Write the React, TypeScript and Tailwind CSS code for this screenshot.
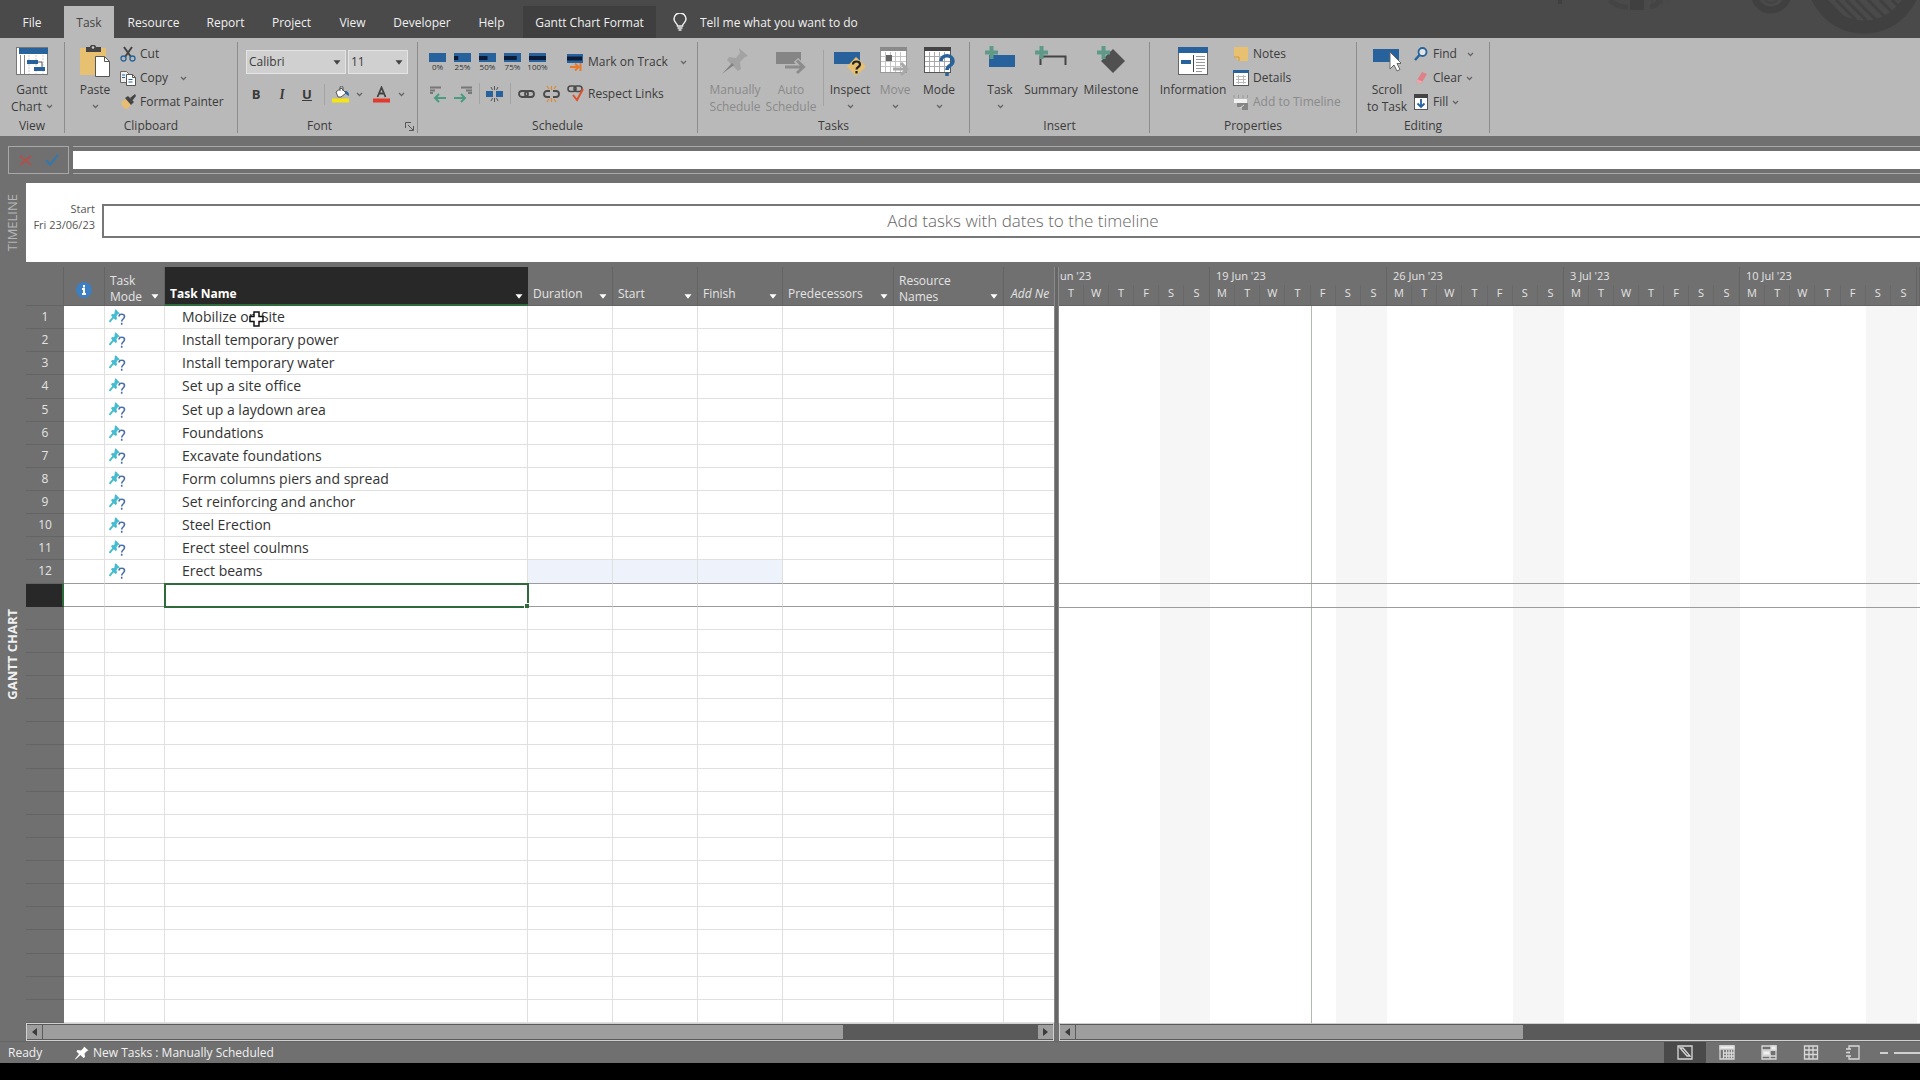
import React from "react";

const tabs = [
  { name: "File", className: "w-[50px] mx-[7px]" },
  { name: "Task", className: "w-[50px] bg-[#b9b9b9] !text-[#444444]" },
  { name: "Resource", className: "w-[79px]" },
  { name: "Report", className: "w-[65px]" },
  { name: "Project", className: "w-[67px]" },
  { name: "View", className: "w-[55px]" },
  { name: "Developer", className: "w-[84px]" },
  { name: "Help", className: "w-[55px] mr-1" },
  { name: "Gantt Chart Format", className: "w-[133px] bg-[#3f3f3f]" },
];

const tasks = [
  "Mobilize on Site",
  "Install temporary power",
  "Install temporary water",
  "Set up a site office",
  "Set up a laydown area",
  "Foundations",
  "Excavate foundations",
  "Form columns piers and spread",
  "Set reinforcing and anchor",
  "Steel Erection",
  "Erect steel coulmns",
  "Erect beams",
];

const ROW_COUNT = 31;
const SELECTED_ROW = 12;
const rows = Array.from({ length: ROW_COUNT }, (_, i) => tasks[i] || "");

const columns = [
  { label: "Duration", key: "duration" },
  { label: "Start", key: "start" },
  { label: "Finish", key: "finish" },
  { label: "Predecessors", key: "predecessors" },
  { label: "Resource Names", key: "resources" },
];

const weeks = [
  { label: "un '23", days: ["T", "W", "T", "F", "S", "S"] },
  { label: "19 Jun '23", days: ["M", "T", "W", "T", "F", "S", "S"], today: 4 },
  { label: "26 Jun '23", days: ["M", "T", "W", "T", "F", "S", "S"] },
  { label: "3 Jul '23", days: ["M", "T", "W", "T", "F", "S", "S"] },
  { label: "10 Jul '23", days: ["M", "T", "W", "T", "F", "S", "S"] },
  { label: "", days: [] },
];

const Chevron = ({ className = "" }) => (
  <svg width="7" height="5" viewBox="0 0 7 5" className={`shrink-0 ${className}`}>
    <path d="M1 1l2.5 2.5L6 1" fill="none" stroke="#666" strokeWidth="1.3" />
  </svg>
);

const Triangle = ({ className = "fill-white" }) => (
  <svg width="8" height="5" viewBox="0 0 8 5" className={`shrink-0 ${className}`}>
    <path d="M0.5 0.3h7L4 4.8z" />
  </svg>
);

/* ---------- ribbon icons ---------- */

const GanttIcon = () => (
  <svg width="32" height="28" viewBox="0 0 32 28">
    <rect x="0.5" y="0.5" width="31" height="27" fill="#fff" stroke="#777" />
    <rect x="3" y="1" width="29" height="6" fill="#27629c" />
    <path d="M4.500 8v19M8.500 8v19" stroke="#888" />
    <path d="M13 8v19M20 8v19M27 8v19" stroke="#ccc" strokeDasharray="2 1" />
    <rect x="11" y="13" width="11" height="4" fill="#27629c" />
    <rect x="18" y="20" width="11" height="4" fill="#27629c" />
    <path d="M22 15h4v5" fill="none" stroke="#555" />
  </svg>
);

const PasteIcon = () => (
  <svg width="32" height="32" viewBox="0 0 32 32">
    <rect x="1" y="3" width="26" height="27" fill="#e8c071" />
    <path d="M7 2h4c0-3 6-3 6 0h5v5H7z" fill="#444" />
    <circle cx="14" cy="2.500" r="1.300" fill="#ccc" />
    <path d="M16.500 11.500h9l5 5v15h-14z" fill="#fff" stroke="#555" />
    <path d="M25.500 11.500v5h5" fill="none" stroke="#555" />
  </svg>
);

const CutIcon = () => (
  <svg width="16" height="16" viewBox="0 0 16 16" fill="none">
    <path d="M4 1l7 10M12 1L5 11" stroke="#444" strokeWidth="2" />
    <circle cx="3.500" cy="12.500" r="2.500" stroke="#27629c" strokeWidth="1.300" />
    <circle cx="12.500" cy="12.500" r="2.500" stroke="#27629c" strokeWidth="1.300" />
  </svg>
);

const CopyIcon = () => (
  <svg width="16" height="16" viewBox="0 0 16 16">
    <path d="M0.500 1.500h6l2 2v9h-8z" fill="#eee" stroke="#666" />
    <path d="M6.500 4.500h6l3 3v8h-9z" fill="#fff" stroke="#555" />
    <path d="M12.500 4.500v3h3" fill="none" stroke="#555" />
    <path d="M2 5h3M2 7.500h3M8.500 9.500h4M8.500 12h4" stroke="#27629c" />
  </svg>
);

const PainterIcon = () => (
  <svg width="16" height="16" viewBox="0 0 16 16">
    <path d="M1 8l5-3 5 6-4 4c-3 0-5-3-6-7z" fill="#e8bd72" />
    <path d="M5 4l3-2 6 6-3 3z" fill="#444" />
    <path d="M10 4l5-4 1 2-4 5z" fill="#444" />
  </svg>
);

const BucketIcon = () => (
  <svg width="18" height="17" viewBox="0 0 18 17">
    <path d="M4 6l5-4 5 5-5 4H6z" fill="#fff" stroke="#555" />
    <path d="M8 5V1.500c0-2 3-2 3 0V5" fill="none" stroke="#555" />
    <path d="M13 5c3 0 4 2 4 5-2-1-3-2-4-3z" fill="#27629c" />
    <rect y="12.500" width="17" height="4" fill="#f5e612" />
  </svg>
);

const FontColorIcon = () => (
  <svg width="17" height="17" viewBox="0 0 17 17">
    <path d="M4.500 11L8.500 1.500 12.500 11M6 7.500h5" fill="none" stroke="#444" strokeWidth="1.800" />
    <rect y="12.500" width="17" height="4" fill="#e23b2e" />
  </svg>
);

const PercentIcon = ({ value }) => (
  <span className="flex w-[17px] flex-col items-center">
    <svg width="17" height="9" viewBox="0 0 17 9">
      <rect width="17" height="9" fill="#27629c" />
      <rect y="3" width={(value / 100) * 17} height="4" fill="#0b1c3a" />
    </svg>
    <span className="text-[8px] leading-[10px] text-[#333]">{value}%</span>
  </span>
);

const IndentIcon = ({ out = false }) => (
  <svg width="18" height="18" viewBox="0 0 18 18" fill="none">
    <path
      d={out ? "M1 2.500h11M1 5.500h5M1 8h3" : "M7 2.500h11M12 5.500h6M14 8h4"}
      stroke="#777"
      strokeWidth="2"
    />
    <path
      d={out ? "M17 13H6M10 9l-4 4 4 4" : "M0 13h11M7 9l4 4-4 4"}
      stroke="#4c9a80"
      strokeWidth="2"
    />
  </svg>
);

const SplitIcon = () => (
  <svg width="17" height="16" viewBox="0 0 17 16">
    <path d="M0 5h7v6H0zM10 5h7v6h-7z" fill="#27629c" />
    <path d="M8.500 0v4M8.500 12v4M5 1l1.500 3M12 1l-1.500 3M5 15l1.500-3M12 15l-1.500-3" stroke="#555" />
  </svg>
);

const LinkIcon = () => (
  <svg width="17" height="16" viewBox="0 0 17 16" fill="none" stroke="#4a4a4a" strokeWidth="1.800">
    <rect x="1" y="5" width="9" height="6" rx="3" />
    <rect x="7" y="5" width="9" height="6" rx="3" />
  </svg>
);

const UnlinkIcon = () => (
  <svg width="17" height="18" viewBox="0 0 17 18" fill="none">
    <path d="M7 6H4a3 3 0 000 6h3M10 6h3a3 3 0 010 6h-3" stroke="#4a4a4a" strokeWidth="1.800" />
    <path d="M8.500 1v4M4 1l2 3M13 1l-2 3M8.500 13v4M4 17l2-3M13 17l-2-3" stroke="#e08a2c" strokeWidth="1.200" />
  </svg>
);

const OnTrackIcon = () => (
  <svg width="17" height="17" viewBox="0 0 17 17">
    <rect width="16" height="9" fill="#27629c" />
    <rect y="2.500" width="15" height="4" fill="#0b1c3a" />
    <path d="M3 13h8M8 9.500l3.500 3.500L8 16.500M13.500 9v8" fill="none" stroke="#e8782a" strokeWidth="2" />
  </svg>
);

const RespectIcon = () => (
  <svg width="17" height="17" viewBox="0 0 17 17" fill="none">
    <rect x="1" y="1" width="8" height="5.500" rx="2.700" stroke="#4a4a4a" strokeWidth="1.600" />
    <rect x="7" y="1" width="8" height="5.500" rx="2.700" stroke="#4a4a4a" strokeWidth="1.600" />
    <path d="M6 10l4 5 6-11" stroke="#e0502a" strokeWidth="2" />
  </svg>
);

const PinIcon = ({ size = 28, className = "fill-[#a0a0a0]" }) => (
  <svg width={size} height={size} viewBox="0 0 28 28" className={className}>
    <path d="M18 1l9 8-3 1-5 5 1 7-3 2-6-6-10 9-1-1 8-10-5-5 2-3 7 1 5-5z" />
  </svg>
);

const ManualIcon = () => (
  <svg width="28" height="28" viewBox="0 0 28 28">
    <path d="M18 1l9 8-3 1-5 5 1 7-3 2-11-11 2-3 7 1 4-5z" fill="#a3a3a3" />
    <path d="M11 16l2 2L1 27z" fill="#808080" />
  </svg>
);

const AutoIcon = () => (
  <svg width="30" height="28" viewBox="0 0 30 28">
    <rect y="5" width="25" height="12" fill="#858585" />
    <path d="M9 20h17M20 13l7 7-7 6" fill="none" stroke="#b9b9b9" strokeWidth="6" />
    <path d="M9 20h18M21 13.500l6.500 6.500-6.500 6" fill="none" stroke="#8c8c8c" strokeWidth="3" />
  </svg>
);

const InspectIcon = () => (
  <svg width="32" height="30" viewBox="0 0 32 30">
    <rect y="6" width="26" height="12" fill="#27629c" />
    <path d="M22 11l10 9.500L22 30l-9-9.500z" fill="#e8c071" />
    <path d="M19 18.500c0-4 7-4 7 0 0 2.500-3.500 2.500-3.500 5M22.500 25v2.500" fill="none" stroke="#222" strokeWidth="2.200" />
  </svg>
);

const CalendarIcon = ({ faded = false, children }) => (
  <svg width="32" height="32" viewBox="0 0 32 32">
    <rect x="1.500" y="2.500" width="26" height="25" fill="#fff" stroke={faded ? "#999" : "#555"} />
    <rect x="1" y="2" width="27" height="4" fill={faded ? "#8a8a8a" : "#444"} />
    <path
      d="M6.500 7v20M11.500 7v20M16.500 7v20M21.500 7v20M2 11.500h25M2 16.500h25M2 21.500h25"
      stroke={faded ? "#c4c4c4" : "#aaa"}
    />
    {children}
  </svg>
);

const Plus = () => <path d="M4.500 0h4v4.500H13v4H8.500V13h-4V8.500H0v-4h4.500z" fill="#5f9a88" />;

const InsertTaskIcon = () => (
  <svg width="30" height="30" viewBox="0 0 30 30">
    <rect x="4" y="9" width="26" height="12" fill="#27629c" />
    <Plus />
  </svg>
);

const SummaryIcon = () => (
  <svg width="32" height="30" viewBox="0 0 32 30">
    <path d="M5.500 19v-8.500h25V19" fill="none" stroke="#444" strokeWidth="2" />
    <Plus />
  </svg>
);

const MilestoneIcon = () => (
  <svg width="28" height="30" viewBox="0 0 28 30">
    <path d="M16 3l12 12-12 12L4 15z" fill="#505050" />
    <Plus />
  </svg>
);

const InformationIcon = () => (
  <svg width="30" height="28" viewBox="0 0 30 28">
    <rect x="0.500" y="0.500" width="29" height="27" fill="#fff" stroke="#666" />
    <rect width="30" height="6" fill="#27629c" />
    <rect x="3" y="13" width="10" height="4" fill="#27629c" />
    <path d="M15.500 8v17" stroke="#444" />
    <path d="M18 9.500h9M18 12.500h9M18 15.500h9M18 18.500h9M18 21.500h9M18 24.500h6" stroke="#999" />
  </svg>
);

const NotesIcon = () => (
  <svg width="16" height="16" viewBox="0 0 16 16">
    <path d="M1 1h14v14H6l-5-4z" fill="#e8c071" />
    <path d="M1 11h5v4" fill="none" stroke="#c79a44" />
  </svg>
);

const DetailsIcon = () => (
  <svg width="16" height="16" viewBox="0 0 16 16">
    <rect x="0.500" y="0.500" width="15" height="15" fill="#fff" stroke="#555" />
    <rect width="16" height="3" fill="#27629c" />
    <path d="M3 6.500h10M3 9.500h10M3 12.500h10M5.500 5v9M10.500 5v9" stroke="#bbb" />
  </svg>
);

const AddTimelineIcon = () => (
  <svg width="16" height="16" viewBox="0 0 16 16">
    <path d="M1 1v3M5.500 1v3M10 1v3M14.500 1v3" stroke="#999" />
    <rect x="1" y="5" width="13" height="4" fill="#f0f0f0" />
    <path d="M4 9h11v7H9v-3H4z" fill="#858585" />
    <path d="M7 14l4-3" stroke="#ddd" />
  </svg>
);

const ScrollIcon = () => (
  <svg width="28" height="26" viewBox="0 0 28 26">
    <rect y="1" width="26" height="13" fill="#27629c" />
    <path d="M17 4v17l4-4 3 6 3-1.500-3-6h4.500z" fill="#fff" stroke="#666" />
  </svg>
);

const FindIcon = () => (
  <svg width="14" height="14" viewBox="0 0 14 14" fill="none" stroke="#27629c">
    <circle cx="8.500" cy="5" r="4" fill="#e4e4e4" strokeWidth="1.800" />
    <path d="M5.500 8L1 13" strokeWidth="2.500" />
  </svg>
);

const ClearIcon = () => (
  <svg width="14" height="14" viewBox="0 0 14 14">
    <path d="M8 1l5 2-6 10-5-2z" fill="#df8088" />
    <path d="M2 11l5 2 1.500-2.500-5-2z" fill="#e9a9ae" />
  </svg>
);

const FillIcon = () => (
  <svg width="14" height="16" viewBox="0 0 14 16">
    <rect x="0.500" y="0.500" width="13" height="15" fill="#fff" stroke="#555" />
    <rect width="14" height="4" fill="#444" />
    <path d="M7 5v8M3.500 9.500L7 13l3.500-3.500" fill="none" stroke="#27629c" strokeWidth="1.800" />
  </svg>
);

/* ---------- ribbon pieces ---------- */

const Group = ({ label, className, launcher = false, children }) => (
  <section className={`flex h-[91px] shrink-0 flex-col border-r border-[#8c8c8c] ${className}`}>
    <div className="flex flex-1">{children}</div>
    <div
      className={`relative h-[14px] text-center text-[12px] leading-[14px] ${launcher ? "pr-4" : ""}`}
    >
      {label}
      {launcher && (
        <button aria-label={`${label} settings`} className="absolute right-[3px] top-[3px]">
          <svg width="9" height="9" viewBox="0 0 9 9" fill="none" stroke="#555">
            <path d="M0.500 6V0.500H6M3 3l5 5M8.500 4v4.500H4" />
          </svg>
        </button>
      )}
    </div>
  </section>
);

const BigButton = ({ icon, lines, chevron = false, disabled = false, className = "" }) => (
  <button
    disabled={disabled}
    className={`flex shrink-0 flex-col items-center whitespace-nowrap text-[12px] leading-[17px] ${
      disabled ? "text-[#8a8a8a]" : ""
    } ${className}`}
  >
    <span className="flex h-[34px] items-center pt-1">{icon}</span>
    <span className="mt-[5px]">{lines[0]}</span>
    <span className="flex h-[17px] items-center gap-1">
      {lines[1]}
      {chevron && <Chevron />}
    </span>
  </button>
);

const SmallButton = ({ icon, label, chevron = "", disabled = false }) => (
  <button
    disabled={disabled}
    className={`flex h-6 items-center whitespace-nowrap text-[12px] ${disabled ? "text-[#8a8a8a]" : ""}`}
  >
    <span className="mr-1 flex w-4 justify-center">{icon}</span>
    {label}
    {chevron && <Chevron className={chevron} />}
  </button>
);

const Divider = ({ className }) => <span className={`w-px bg-[#a3a3a3] ${className}`} />;

const TitleArt = () => (
  <svg width="380" height="38" viewBox="0 0 380 38" fill="none" className="ml-auto self-start">
    <path d="M20 0v4" stroke="#404040" strokeWidth="4" />
    <path d="M70 0q6 7 18 7M120 0q-4 6-10 7" stroke="#444" strokeWidth="5" />
    <rect x="90" width="14" height="10" fill="#404040" />
    <path d="M112 0v8M117 0v7M122 0v5M127 0v3" stroke="#444" />
    <circle cx="231" cy="-7" r="17" stroke="#404040" strokeWidth="7" />
    <circle cx="231" cy="-4" r="7" stroke="#444" strokeWidth="2" />
    <circle cx="324" cy="-24" r="51" stroke="#404040" strokeWidth="13" />
    <path
      d="M286 0l18 18M296 0l20 20M306 0l20 20M316 0l20 20M328 0l17 17M340 0l14 14M352 0l9 9"
      stroke="#404040"
      strokeWidth="3"
    />
  </svg>
);

const Ribbon = () => (
  <header>
    <nav className="flex h-[38px] items-end bg-[#4a4a4a]">
      {tabs.map((t) => (
        <button
          key={t.name}
          className={`h-8 shrink-0 whitespace-nowrap pt-px text-center text-[12px] text-[#f0f0f0] ${t.className}`}
        >
          {t.name}
        </button>
      ))}
      <svg
        width="14"
        height="18"
        viewBox="0 0 14 18"
        fill="none"
        stroke="#f0f0f0"
        strokeWidth="1.500"
        className="mb-[7px] ml-[17px] shrink-0"
      >
        <path d="M4.500 13c0-2.500-3.500-3.500-3.500-7a6 6 0 0112 0c0 3.500-3.500 4.500-3.500 7zM4.500 15h5M5.500 17h3" />
      </svg>
      <input
        aria-label="Tell me what you want to do"
        placeholder="Tell me what you want to do"
        className="ml-[13px] h-8 w-[200px] bg-transparent pt-px text-[12px] text-white outline-none placeholder:text-[#f0f0f0]"
      />
      <TitleArt />
    </nav>

    <div className="flex h-[98px] overflow-hidden bg-[#b9b9b9] pt-1 text-[#3b3b3b]">
      <Group label="View" className="w-[65px]">
        <BigButton className="w-full" icon={<GanttIcon />} lines={["Gantt", "Chart"]} chevron />
      </Group>

      <Group label="Clipboard" className="w-[173px]">
        <BigButton className="ml-[11px] w-[38px]" icon={<PasteIcon />} lines={["Paste", ""]} chevron />
        <div className="ml-[6px] flex flex-col">
          <SmallButton icon={<CutIcon />} label="Cut" />
          <SmallButton icon={<CopyIcon />} label="Copy" chevron="ml-3" />
          <SmallButton icon={<PainterIcon />} label="Format Painter" />
        </div>
      </Group>

      <Group label="Font" className="w-[180px]" launcher>
        <div className="w-full px-2 pt-2">
          <div className="flex gap-[2px]">
            <div className="flex h-6 w-[100px] items-center border border-[#e4e4e4] bg-[#d0d0d0] pr-1">
              <select
                aria-label="Font"
                className="min-w-0 flex-1 appearance-none bg-transparent pl-[2px] text-[12px] outline-none"
              >
                <option>Calibri</option>
              </select>
              <Triangle className="fill-[#444]" />
            </div>
            <div className="flex h-6 w-[60px] items-center border border-[#e4e4e4] bg-[#d0d0d0] pr-1">
              <select
                aria-label="Font size"
                className="min-w-0 flex-1 appearance-none bg-transparent pl-[2px] text-[12px] outline-none"
              >
                <option>11</option>
              </select>
              <Triangle className="fill-[#444]" />
            </div>
          </div>
          <div className="mt-[10px] flex h-[21px] items-center text-[13px]">
            <button className="w-5 font-bold">B</button>
            <button className="ml-[6px] w-5 font-serif font-bold italic">I</button>
            <button className="ml-[5px] w-5 font-bold underline">U</button>
            <Divider className="ml-[7px] h-full" />
            <button aria-label="Background color" className="ml-[7px]">
              <BucketIcon />
            </button>
            <Chevron className="ml-[6px]" />
            <button aria-label="Font color" className="ml-[10px]">
              <FontColorIcon />
            </button>
            <Chevron className="ml-2" />
          </div>
        </div>
      </Group>

      <Group label="Schedule" className="w-[280px]">
        <div className="ml-[11px] pt-[10px]">
          <div className="flex h-5 items-center gap-2">
            {[0, 25, 50, 75, 100].map((v) => (
              <button key={v}>
                <PercentIcon value={v} />
              </button>
            ))}
            <button className="ml-[13px] flex items-center gap-1 whitespace-nowrap text-[12px]">
              <OnTrackIcon />
              Mark on Track
              <Chevron className="ml-2" />
            </button>
          </div>
          <div className="mt-[11px] flex h-[21px] items-center">
            <button aria-label="Outdent"><IndentIcon out /></button>
            <button aria-label="Indent" className="ml-[7px]"><IndentIcon /></button>
            <Divider className="ml-[7px] h-full" />
            <button aria-label="Split task" className="ml-[6px]"><SplitIcon /></button>
            <Divider className="ml-[7px] h-full" />
            <button aria-label="Link tasks" className="ml-[7px]"><LinkIcon /></button>
            <button aria-label="Unlink tasks" className="ml-2"><UnlinkIcon /></button>
            <button className="ml-[7px] flex items-center gap-1 whitespace-nowrap text-[12px]">
              <RespectIcon />
              Respect Links
            </button>
          </div>
        </div>
      </Group>

      <Group label="Tasks" className="w-[272px]">
        <BigButton className="ml-2 w-[58px]" icon={<ManualIcon />} lines={["Manually", "Schedule"]} disabled />
        <BigButton className="w-[54px]" icon={<AutoIcon />} lines={["Auto", "Schedule"]} disabled />
        <Divider className="ml-[5px] mt-2 h-[56px]" />
        <BigButton className="ml-[3px] w-[46px]" icon={<InspectIcon />} lines={["Inspect", ""]} chevron />
        <BigButton
          className="w-[44px]"
          disabled
          icon={
            <CalendarIcon faded>
              <rect x="7" y="10" width="6" height="6" fill="#666" />
              <path d="M14 24h13M22 18l6 6-6 6" fill="none" stroke="#a8a8a8" strokeWidth="3" />
            </CalendarIcon>
          }
          lines={["Move", ""]}
          chevron
        />
        <BigButton
          className="w-[44px]"
          icon={
            <CalendarIcon>
              <path
                d="M18 16c0-7 12-7 12 0 0 5-6 4-6 9M24 28v3"
                fill="none"
                stroke="#27629c"
                strokeWidth="3.500"
              />
            </CalendarIcon>
          }
          lines={["Mode", ""]}
          chevron
        />
      </Group>

      <Group label="Insert" className="w-[180px]">
        <BigButton className="ml-[7px] w-[46px]" icon={<InsertTaskIcon />} lines={["Task", ""]} chevron />
        <BigButton className="w-[56px]" icon={<SummaryIcon />} lines={["Summary", ""]} />
        <BigButton className="ml-[2px] w-[60px]" icon={<MilestoneIcon />} lines={["Milestone", ""]} />
      </Group>

      <Group label="Properties" className="w-[207px]">
        <BigButton className="ml-[7px] w-[72px]" icon={<InformationIcon />} lines={["Information", ""]} />
        <div className="ml-1 flex flex-col">
          <SmallButton icon={<NotesIcon />} label="Notes" />
          <SmallButton icon={<DetailsIcon />} label="Details" />
          <SmallButton icon={<AddTimelineIcon />} label="Add to Timeline" disabled />
        </div>
      </Group>

      <Group label="Editing" className="w-[133px]">
        <BigButton className="ml-[7px] w-[46px]" icon={<ScrollIcon />} lines={["Scroll", "to Task"]} />
        <div className="ml-[3px] flex flex-col">
          <SmallButton icon={<FindIcon />} label="Find" chevron="ml-[10px]" />
          <SmallButton icon={<ClearIcon />} label="Clear" chevron="ml-1" />
          <SmallButton icon={<FillIcon />} label="Fill" chevron="ml-1" />
        </div>
      </Group>
    </div>
  </header>
);

const EntryBar = () => (
  <div className="flex h-[47px] items-center gap-1 pl-2 pt-px">
    <div className="flex h-7 w-[61px] shrink-0 items-center justify-center gap-[13px] border border-[#a8a8a8]">
      <button aria-label="Cancel entry">
        <svg width="13" height="11" viewBox="0 0 13 11">
          <path d="M1 1l11 9M12 1L1 10" stroke="#b0504a" strokeWidth="2" />
        </svg>
      </button>
      <button aria-label="Confirm entry">
        <svg width="14" height="12" viewBox="0 0 14 12">
          <path d="M1 6l4 4.500L13 1" fill="none" stroke="#3b76a5" strokeWidth="2.500" />
        </svg>
      </button>
    </div>
    <div className="h-7 flex-1 border-y border-[#a8a8a8] py-1">
      <input aria-label="Entry bar" className="block h-[18px] w-full bg-white outline-none" />
    </div>
  </div>
);

const SideLabel = ({ children, className }) => (
  <div className="flex w-[26px] shrink-0 items-center justify-center">
    <span className={`rotate-180 whitespace-nowrap [writing-mode:vertical-rl] ${className}`}>{children}</span>
  </div>
);

const Timeline = () => (
  <div className="flex h-[79px] overflow-hidden">
    <SideLabel className="text-[13px] text-[#b5b5b5]">TIMELINE</SideLabel>
    <div className="flex flex-1 items-start overflow-hidden bg-white">
      <div className="w-[76px] shrink-0 pr-[7px] pt-[18px] text-right text-[11px] leading-4 text-[#555]">
        Start
        <br />
        Fri 23/06/23
      </div>
      <div className="-mr-6 mt-[21px] flex h-[34px] flex-1 items-center justify-center border-2 border-[#777] text-[17px] font-light text-[#666]">
        Add tasks with dates to the timeline
      </div>
    </div>
  </div>
);

const TaskModeIcon = () => (
  <svg width="17" height="16" viewBox="0 0 17 16">
    <path d="M6 0l5 4.500-2 .5-1.500 2 .5 3-1.500 1L2 6.500l1-1.500 2.500.3L7 3z" fill="#45bccf" />
    <path d="M7 1L5.500 9.500M4.500 8L0.500 13" fill="none" stroke="#45bccf" strokeWidth="2" />
    <path d="M10 7.500c0-3 5.500-3 5.500 0 0 2.500-2.800 2.500-2.800 5M12.700 13.700v2" fill="none" stroke="#4a6fa5" strokeWidth="1.600" />
  </svg>
);

const headCell = "border-b border-r border-[#646464] px-[5px] text-left align-bottom font-normal leading-4";

const TaskTable = () => (
  <table className="h-full w-[1028px] table-fixed border-separate border-spacing-0 text-[12px] text-[#e4e4e4]">
    <colgroup>
      <col className="w-[38px]" />
      <col className="w-[41px]" />
      <col className="w-[60px]" />
      <col className="w-[363px]" />
      <col className="w-[85px]" />
      <col className="w-[85px]" />
      <col className="w-[85px]" />
      <col className="w-[111px]" />
      <col className="w-[110px]" />
      <col className="w-[50px]" />
    </colgroup>
    <thead>
      <tr className="h-[39px]">
        <th aria-label="Row" className={headCell}></th>
        <th aria-label="Indicators" className={headCell}>
          <svg width="16" height="18" viewBox="0 0 16 18" className="mx-auto mb-[6px]">
            <circle cx="8" cy="9" r="8" fill="#3d7fc0" />
            <path d="M8 4v2.500M6 8h2v5M6 13h4" fill="none" stroke="#fff" strokeWidth="2" />
          </svg>
        </th>
        <th className={headCell}>
          <div className="flex items-end justify-between">
            <span>
              Task
              <br />
              Mode
            </span>
            <Triangle className="mb-[6px] fill-white" />
          </div>
        </th>
        <th className="border-b-2 border-[#2f6b3a] bg-[#282828] px-[5px] pb-[2px] text-left align-bottom font-bold leading-4 text-white">
          <div className="flex items-end justify-between">
            Task Name
            <Triangle className="mb-[3px] fill-white" />
          </div>
        </th>
        {columns.map((c) => (
          <th key={c.key} className={`${headCell} ${c.key === "resources" ? "" : "pb-[3px]"}`}>
            <div className="flex items-end justify-between">
              <span className={c.key === "resources" ? "w-[60px]" : ""}>{c.label}</span>
              <Triangle className={c.key === "resources" ? "mb-[6px] fill-white" : "mb-[3px] fill-white"} />
            </div>
          </th>
        ))}
        <th className="overflow-hidden whitespace-nowrap border-b border-[#646464] pb-[3px] pl-[7px] text-left align-bottom font-normal italic leading-4">
          Add Ne
        </th>
      </tr>
    </thead>
    <tbody>
      {rows.map((name, i) => {
        const selected = i === SELECTED_ROW;
        const line = selected || i === SELECTED_ROW - 1 ? "border-b-[#9c9c9c]" : "border-b-[#e0e0e0]";
        const cell = `border-b border-r border-r-[#e0e0e0] bg-white p-0 ${line}`;
        return (
          <tr key={i} className="h-[23px]">
            <th
              className={`border-b p-0 text-center font-normal leading-5 ${
                selected
                  ? "border-b-[#282828] border-r-2 border-r-[#2f6b3a] bg-[#282828]"
                  : "border-b-[#646464]"
              }`}
            >
              {name ? i + 1 : ""}
            </th>
            <td className={cell}></td>
            <td className={cell}>{name && <span className="block pl-1"><TaskModeIcon /></span>}</td>
            <td
              className={`${cell} ${
                selected ? "relative z-10 outline-2 -outline-offset-1 outline-[#2f6b3a]" : ""
              }`}
            >
              <span className="block whitespace-nowrap pl-[17px] text-[14px] leading-5 text-[#333]">{name}</span>
              {selected && (
                <span className="absolute -bottom-[2px] -right-[2px] size-[5px] border-l border-t border-white bg-[#2f6b3a]" />
              )}
            </td>
            {columns.map((c, n) => (
              <td key={c.key} className={`${cell} ${i === 11 && n < 3 ? "!bg-[#edf2fb]" : ""}`}></td>
            ))}
            <td className={`border-b bg-white ${line}`}></td>
          </tr>
        );
      })}
    </tbody>
  </table>
);

const weekGrid = "grid grid-cols-[151fr_177fr_177fr_176fr_177fr_3fr]";

const dayGrid = (week) => (week.days.length === 6 ? "grid-cols-6" : "grid-cols-7");

const GanttChart = () => (
  <div className="flex h-full min-w-0 flex-1 flex-col overflow-hidden">
    <div className={`${weekGrid} h-[39px] border-b border-[#646464] text-[#e4e4e4]`}>
      {weeks.map((w, i) => (
        <div key={i} className="flex min-w-0 flex-col overflow-hidden border-r border-[#646464]">
          <div className={`h-[18px] text-[11px] leading-[18px] ${i === 0 ? "pl-px" : "pl-[6px]"}`}>
            {w.label}
          </div>
          <div className={`grid flex-1 ${dayGrid(w)} text-center text-[11px] leading-4`}>
            {w.days.map((d, n) => (
              <span key={n} className="border-r border-[#686868] last:border-r-0">
                {d}
              </span>
            ))}
          </div>
        </div>
      ))}
    </div>
    <div className="relative flex-1 bg-white">
      <div className={`${weekGrid} h-full`}>
        {weeks.map((w, i) => (
          <div key={i} className={`grid ${dayGrid(w)}`}>
            {w.days.map((d, n) => (
              <span
                key={n}
                className={`${d === "S" ? "bg-[#f6f6f6]" : ""} ${
                  w.today === n ? "border-l border-[#adbdad]" : ""
                }`}
              />
            ))}
          </div>
        ))}
      </div>
      {/* selected row lines run over the bars area */}
      <div className="absolute inset-0 flex flex-col">
        {rows.map((_, i) => (
          <span
            key={i}
            className={`flex-1 ${
              i === SELECTED_ROW || i === SELECTED_ROW - 1 ? "border-b border-[#9c9c9c]" : ""
            }`}
          />
        ))}
      </div>
    </div>
  </div>
);

const Arrow = ({ right = false }) => (
  <button
    aria-label={right ? "Scroll right" : "Scroll left"}
    className="flex w-[15px] shrink-0 items-center justify-center bg-[#9e9e9e]"
  >
    <svg width="5" height="8" viewBox="0 0 5 8">
      <path d={right ? "M0 0l5 4-5 4z" : "M5 0L0 4l5 4z"} fill="#3a3a3a" />
    </svg>
  </button>
);

const viewIcons = [
  {
    label: "Gantt chart",
    active: true,
    art: <path d="M1 1h14v13H1zM3 3h3l7 8h-3z" />,
  },
  {
    label: "Task usage",
    art: (
      <>
        <path d="M1 1h14v13H1zM4.500 5v9M7.500 5v9M10 5v9M12.500 5v9M4 8h11M4 11h11" />
        <path d="M1 1h14v3H1z" fill="#f0f0f0" />
      </>
    ),
  },
  {
    label: "Team planner",
    art: (
      <>
        <path d="M1 1h14v13H1zM1 5h14M1 11h14M9 9v5" />
        <path d="M10 1h5v4h-5zM2 6h7v4H2z" fill="#f0f0f0" />
      </>
    ),
  },
  {
    label: "Resource sheet",
    art: <path d="M1.500 1h13v13h-13zM6 1v13M10 1v13M1.500 5h13M1.500 9.500h13" />,
  },
  {
    label: "Report",
    art: <path d="M4 4V1h10v13H4v-3M4 6.500v2M1 4h5M1 7.500h4M1 11h5" />,
  },
];

const StatusBar = () => (
  <footer className="flex h-[22px] items-stretch overflow-hidden border-t border-[#666] text-[12px] leading-[21px] text-[#f0f0f0]">
    <span className="w-[75px] pl-2">Ready</span>
    <button className="flex items-center gap-1">
      <PinIcon size={14} className="fill-white" />
      New Tasks : Manually Scheduled
    </button>
    <div className="ml-auto flex">
      {viewIcons.map((v) => (
        <button
          key={v.label}
          aria-label={v.label}
          className={`flex w-[42px] items-center justify-center ${v.active ? "bg-[#4a4a4a]" : ""}`}
        >
          <svg width="16" height="15" viewBox="0 0 16 15" fill="none" stroke="#d8d8d8" strokeWidth="1.300">
            {v.art}
          </svg>
        </button>
      ))}
    </div>
    <div className="flex w-[46px] items-center overflow-hidden pl-[6px]">
      <button aria-label="Zoom out" className="flex h-full w-[10px] shrink-0 items-center">
        <span className="h-[2px] w-2 bg-[#d0d0d0]" />
      </button>
      <input
        type="range"
        aria-label="Zoom"
        className="ml-1 h-[2px] w-[120px] shrink-0 appearance-none bg-[#d0d0d0]"
      />
    </div>
  </footer>
);

export default function App() {
  return (
    <div className="flex h-screen flex-col overflow-hidden bg-black pb-[17px] font-['Open_Sans','Noto_Sans',sans-serif]">
      <Ribbon />
      <div className="flex min-h-0 flex-1 flex-col bg-[#707070]">
        <EntryBar />
        <Timeline />
        <main className="mt-[5px] flex min-h-0 flex-1">
          <SideLabel className="text-[13px] font-bold text-[#f0f0f0]">GANTT CHART</SideLabel>
          <div className="flex min-w-0 flex-1 flex-col">
            <div className="flex min-h-0 flex-1">
              <div className="relative h-full w-[1028px] shrink-0 overflow-hidden">
                <TaskTable />
                <svg width="15" height="16" viewBox="0 0 15 16" className="absolute left-[223px] top-[44px]">
                  <path
                    d="M5 1h5v4.500h4v5h-4V15H5v-4.500H1v-5h4z"
                    fill="#fff"
                    stroke="#111"
                    strokeWidth="1.500"
                  />
                </svg>
              </div>
              <div className="w-[5px] shrink-0 border-x border-[#8a8a8a] bg-[#666]" />
              <GanttChart />
            </div>
            <div className="flex h-[18px]">
              <div className="flex w-[1028px] shrink-0 gap-px border border-[#d0d0d0] bg-[#5a5a5a] py-px">
                <Arrow />
                <div className="h-full w-[800px] bg-[#9e9e9e]" />
                <div className="flex-1" />
                <Arrow right />
              </div>
              <div className="w-[5px] shrink-0" />
              <div className="flex flex-1 gap-px border border-r-0 border-[#d0d0d0] bg-[#5a5a5a] py-px">
                <Arrow />
                <div className="h-full w-[52%] bg-[#9e9e9e]" />
              </div>
            </div>
          </div>
        </main>
        <StatusBar />
      </div>
    </div>
  );
}
